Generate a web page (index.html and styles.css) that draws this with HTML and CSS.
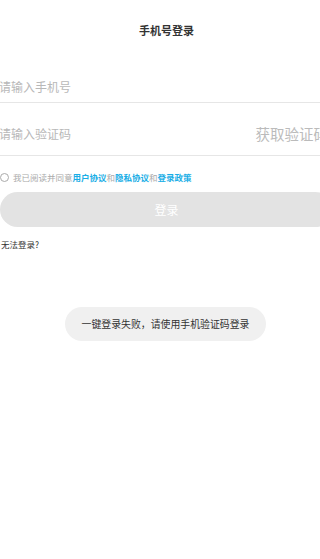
FILE: index.html
```html
<!DOCTYPE html>
<html lang="zh">
<head>
<meta charset="utf-8">
<title>手机号登录</title>
<link rel="stylesheet" href="styles.css">
</head>
<body>
<div class="page">
  <header class="header">手机号登录</header>
  <div class="field field-phone">
    <span class="placeholder">请输入手机号</span>
  </div>
  <div class="field field-code">
    <span class="placeholder">请输入验证码</span>
    <span class="get-code">获取验证码</span>
  </div>
  <div class="agree">
    <span class="radio"></span>
    <span class="agree-text">我已阅读并同意<b class="link">用户协议</b>和<b class="link">隐私协议</b>和<b class="link">登录政策</b></span>
  </div>
  <div class="btn">登录</div>
  <div class="help">无法登录?</div>
  <div class="toast">一键登录失败，请使用手机验证码登录</div>
</div>
</body>
</html>
```
FILE: styles.css
```css
html, body {
  margin: 0;
  padding: 0;
  background: #fff;
  overflow: hidden;
}
body {
  font-family: "Noto Sans CJK SC", "Noto Sans", sans-serif;
  width: 320px;
  height: 559px;
}
.page {
  position: relative;
  width: 333px;
  height: 559px;
  display: flex;
  flex-direction: column;
}
.header {
  height: 60px;
  display: flex;
  align-items: center;
  justify-content: center;
  font-size: 11px;
  font-weight: bold;
  color: #333;
}
.field {
  display: flex;
  align-items: center;
  justify-content: space-between;
  border-bottom: 1px solid #e6e6e6;
}
.field-phone {
  height: 41px;
  padding-top: 1px;
}
.field-code {
  height: 52px;
}
.placeholder {
  font-size: 12px;
  color: #b8b8b8;
  margin-left: -1px;
}
.field-phone .placeholder { margin-top: 10px; }
.field-code .placeholder { margin-top: 8px; }
.get-code {
  flex: none;
  white-space: nowrap;
  font-size: 14.5px;
  color: #bbb;
  margin-top: 8px;
  margin-right: 5px;
}
.agree {
  display: flex;
  align-items: center;
  gap: 4px;
  margin-top: 13px;
  height: 16px;
}
.radio {
  width: 9px;
  height: 9px;
  border: 1px solid #aaa;
  border-radius: 50%;
  box-sizing: border-box;
}
.agree-text {
  font-size: 8.5px;
  color: #aaa;
}
.link {
  color: #1aaee6;
  font-weight: bold;
}
.btn {
  margin-top: 7px;
  height: 35px;
  border-radius: 17.5px;
  background: #e3e3e3;
  color: #fff;
  font-size: 12px;
  display: flex;
  align-items: center;
  justify-content: center;
}
.help {
  margin-top: 11px;
  margin-left: 1px;
  font-size: 8.5px;
  color: #333;
}
.toast {
  position: absolute;
  top: 307px;
  left: 65px;
  width: 201px;
  height: 34px;
  border-radius: 17px;
  background: #f0f0f0;
  color: #333;
  font-size: 9.9px;
  display: flex;
  align-items: center;
  justify-content: center;
}
```
